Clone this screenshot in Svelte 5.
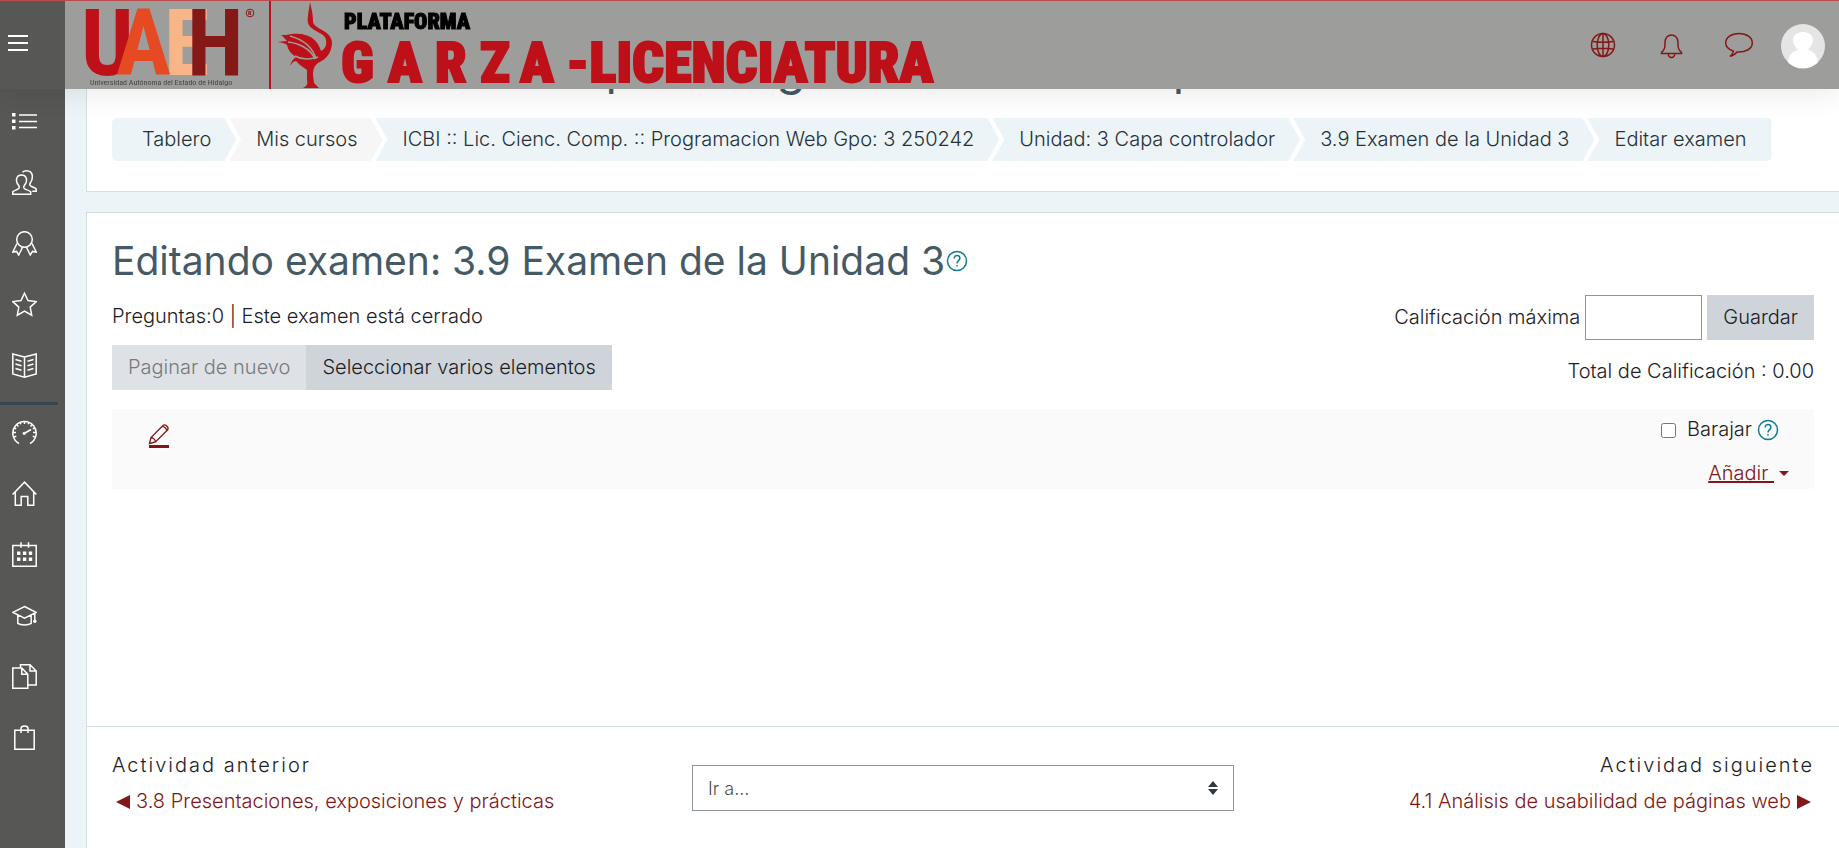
<script>
  const crumbs = [
    'Tablero',
    'Mis cursos',
    'ICBI :: Lic. Cienc. Comp. :: Programacion Web Gpo: 3 250242',
    'Unidad: 3 Capa controlador',
    '3.9 Examen de la Unidad 3',
    'Editar examen'
  ];

  const courseLinks = [
    { name: 'Curso', icon: 'list' },
    { name: 'Participantes', icon: 'users' },
    { name: 'Insignias', icon: 'badge' },
    { name: 'Competencias', icon: 'star' },
    { name: 'Calificaciones', icon: 'book' }
  ];

  const siteLinks = [
    { name: 'Tablero', icon: 'gauge' },
    { name: 'Inicio', icon: 'home' },
    { name: 'Calendario', icon: 'calendar' },
    { name: 'Mis cursos', icon: 'cap' },
    { name: 'Archivos', icon: 'files' },
    { name: 'Banco de contenido', icon: 'bag' }
  ];

  let maxGrade = $state('');
  let shuffle = $state(false);
</script>

{#snippet glyph(name)}
  <svg class="glyph" viewBox="0 0 25 25" aria-hidden="true">
    {#if name === 'list'}
      <path d="M7 6h18M7 12.500h18M7 18.500h18" />
      <path class="solid" d="M0 4h3.500v3.500H0zM0 10.500h3.500V14H0zM0 17h3.500v3.500H0z" />
    {:else if name === 'users'}
      <path d="M.8 24.200v-2.500c1.500-1.600 5-1.700 6.200-3.500.5-.8.300-1.900-.3-2.700C4.500 13 3.800 10 5.200 7.200 6.500 4.400 12.500 4.400 13.800 7.200c1.400 2.800.7 5.800-1.500 8.300-.6.800-.8 1.900-.3 2.700 1.200 1.800 5.200 1.900 6.700 3.500v2.500z" />
      <path d="M10.500 2.200c2.500-2.200 8.500-2 9.500 2 .8 3.200.2 6.300-1.700 8.800-.6.900-.7 1.900-.1 2.600 1.500 1.600 4.800 1.800 6 3.400v2.300h-4" />
    {:else if name === 'badge'}
      <circle cx="12.500" cy="8.500" r="7.800" />
      <path d="M5 12.500L.8 21l3.700-.6 2.200 3.600 4-8M20 12.500l4.200 8.500-3.700-.6-2.200 3.600-4-8" />
    {:else if name === 'star'}
      <path d="M12.500 1.200l3.500 7.400 8.200 1-6 5.500 1.500 8.100-7.200-4-7.200 4 1.500-8.100-6-5.500 8.200-1z" />
    {:else if name === 'book'}
      <path d="M12.500 4L.8 1v20l11.700 3.200L24.200 21V1zM12.500 4v20" />
      <path d="M3.500 6.500l6 1.700M3.500 11l6 1.700M3.500 15.500l6 1.700M21.500 6.500l-6 1.700M21.500 11l-6 1.700M21.500 15.500l-6 1.700" />
    {:else if name === 'gauge'}
      <path d="M7 23.500A11.700 11.700 0 1 1 18 23.500" />
      <path d="M12.500 1v3M1 12.500h3M21 12.500h3M4.500 4.500l2 2M20.500 4.500l-2 2M8 2l.8 2.300M17 2l-.8 2.300M2 8l2.200.8M23 8l-2.200.8M2 17l2.300-.8M23 17l-2.300-.8M13 13l6-3.500" />
      <circle class="solid" cx="12.300" cy="13.300" r="1.600" />
    {:else if name === 'home'}
      <path d="M.6 13.600L12.500 1.200l11.900 12.400M3.300 11v13.200h5.900v-8.800h6.600v8.800h5.900V11" />
    {:else if name === 'calendar'}
      <path d="M.8 3.500h23.400v20.700H.8zM9 .3v5.500M16.500.3v5.500" />
      <path class="solid" d="M5 9.500h3.400v3.400H5zM10.900 9.500h3.400v3.400h-3.400zM16.800 9.500h3.400v3.400h-3.400zM5 15.500h3.400v3.400H5zM10.900 15.500h3.400v3.400h-3.400zM16.800 15.500h3.400v3.400h-3.400z" />
    {:else if name === 'cap'}
      <path d="M12.500 3.500L24 9.300l-11.500 5.900L1 9.300zM5.800 12v8.300c2.700 2.200 10.700 2.200 13.400 0V12M22.800 10v8" />
      <circle class="solid" cx="22.800" cy="18.300" r="1.700" />
    {:else if name === 'files'}
      <path d="M.8 4h9l6 6.200v14H.8zM9.800 4v6.200h6" />
      <path d="M8.500 3.800V.8h9.500l6.200 6.200v14H16M18 .8V7h6.200" />
    {:else if name === 'bag'}
      <path d="M2.800 5.200h19.400v19H2.800zM9 8V3.500C9 .2 16 .2 16 3.500V8" />
    {/if}
  </svg>
{/snippet}

{#snippet help()}
  <svg class="help" viewBox="0 0 22 22" aria-hidden="true">
    <circle cx="11" cy="11" r="9.500" />
    <path d="M8.200 8.500c0-4 5.700-3.700 5.700-.2 0 2.300-2.900 2.500-2.900 5.200M11 15v1.500" />
  </svg>
{/snippet}

<header class="topbar">
  <button class="burger" aria-label="Menú"><span></span><span></span><span></span></button>

  <a class="brand" href="#inicio" aria-label="UAEH Plataforma Garza Licenciatura">
    <svg width="880" height="88" viewBox="0 0 880 88">
      <g class="uaeh">
        <text x="15" y="74" fill="#bd1018">U</text>
        <text x="98" y="74" fill="#f8b688">E</text>
        <text x="50" y="74" fill="#e64a22">A</text>
        <text x="121" y="74" fill="#841917">H</text>
      </g>
      <text class="small" x="24" y="84">Universidad Autónoma del Estado de Hidalgo</text>
      <circle cx="184" cy="12" r="3.800" fill="none" stroke="#841917" />
      <text class="reg" x="182" y="14">R</text>
      <path d="M203 0h2v88h-2z" fill="#bd1018" />
      <g fill="#bd1018">
        <path d="M244 1c2 9 3 13 3 20 2 8 18 8 19 20 0 10-5 17-14 21-4 3-5 7-5 12l1 8 5 5h-16c4-2 5-4 4-8l0-10-7-5-4-4-3 1-3 4c1-4 3-7 6-9-5-3-8-7-9-12-2-2-8-3-10-3l10-1c-3-3-4-5-6-6 4 0 7 0 10-1 10-1 25 0 30 17 4-2 6-6 5-11-1-8-15-8-18-17-1-5 1-13 2-21z" />
        <path d="M222 41c10 1 22 6 27 17M224 35c11 3 22 9 26 23M229 55c7 4 14 4 23 1" fill="none" stroke="#9d9d9b" stroke-width="1.500" />
      </g>
      <text class="plataforma" x="278" y="28">PLATAFORMA</text>
      <g class="garza">
        <text x="275" y="81">G</text>
        <text x="322" y="81">A</text>
        <text x="369" y="81">R</text>
        <text x="414" y="81">Z</text>
        <text x="454" y="81">A</text>
        <text x="500" y="81">-LICENCIATURA</text>
      </g>
    </svg>
  </a>

  <nav class="tools" aria-label="Usuario">
    <button aria-label="Idioma">
      <svg viewBox="0 0 28 28"><circle cx="10" cy="14" r="11.500" /><ellipse cx="10" cy="14" rx="5.800" ry="11.500" /><path d="M10 2.500v23M0 10.500c6 1 14 1 20 0M0 18c6-1 14-1 20 0" /></svg>
    </button>
    <button aria-label="Notificaciones">
      <svg viewBox="0 0 28 28"><path d="M2.500 22.500v-1.200c3.500-2.800 3.500-5 3.500-10C6 1.500 19 1.500 19 11.300c0 5 0 7.200 3.500 10v1.200zM9.300 23c.3 4.600 6.100 4.600 6.400 0" /></svg>
    </button>
    <button aria-label="Mensajes">
      <svg viewBox="0 0 28 28"><path d="M8.500 20.200C3.500 18.500.7 15.500.7 12 .7 6.500 6.500 2.500 14 2.500s13.300 4 13.300 9.500S21 21.500 12 21c-2 2.500-4 3.800-7 4.300 2-1.500 3-3 3.500-5.100z" /></svg>
    </button>
    <button class="avatar" aria-label="Menú de usuario">
      <svg viewBox="0 0 44 44"><circle cx="22" cy="22" r="22" fill="#e5e5e5" /><path d="M7 38.500C8 27 16 27 17 25.500 8 18 12 8 22 8s14 10 5 17.500C28 27 36 27 37 38.500A22 22 0 0 1 7 38.500z" fill="#fff" /></svg>
    </button>
  </nav>
</header>

<aside class="sidebar">
  <nav aria-label="Curso">
    {#each courseLinks as link}
      <a href="#{link.icon}" aria-label={link.name}>{@render glyph(link.icon)}</a>
    {/each}
  </nav>
  <nav class="site" aria-label="Sitio">
    {#each siteLinks as link}
      <a href="#{link.icon}" aria-label={link.name}>{@render glyph(link.icon)}</a>
    {/each}
  </nav>
</aside>

<main>
  <section class="card heading">
    <h1>ICBI :: Lic. Cienc. Comp. :: Programacion Web Gpo: 3 250242</h1>
    <ol class="crumbs">
      {#each crumbs as crumb}
        <li><a href="#ruta">{crumb}</a></li>
      {/each}
    </ol>
  </section>

  <section class="card editor">
    <div class="body">
      <h2>Editando examen: 3.9 Examen de la Unidad 3<button class="ask" aria-label="Ayuda">{@render help()}</button></h2>

      <div class="controls">
        <div class="left">
          <p>Preguntas:0 | Este examen está cerrado</p>
          <div class="group">
            <button class="btn" disabled>Paginar de nuevo</button>
            <button class="btn">Seleccionar varios elementos</button>
          </div>
        </div>
        <div class="right">
          <form class="grade" onsubmit={(e) => e.preventDefault()}>
            <label for="maxgrade">Calificación máxima</label>
            <input id="maxgrade" type="text" bind:value={maxGrade} />
            <button class="btn save">Guardar</button>
          </form>
          <p>Total de Calificación : 0.00</p>
        </div>
      </div>

      <div class="slot">
        <a class="pencil" href="#editar" aria-label="Editar encabezado">
          <svg viewBox="0 0 22 26"><path d="M1.500 20.500L3 14.500 15 2.500c2-2 6.500 2 4.500 4.500L7.500 19zM3 14.500c2 0 4.500 2.200 4.500 4.500M14.200 3.300c2 0 4.500 2.500 4.500 4.500" /><path class="bar" d="M1 22h20v3H1z" /></svg>
        </a>
        <div class="options">
          <div class="shuffle">
            <input id="shuffle" type="checkbox" bind:checked={shuffle} />
            <label for="shuffle">Barajar</label>
            <button class="ask" aria-label="Ayuda con Barajar">{@render help()}</button>
          </div>
          <a class="add" href="#agregar"><span>Añadir&nbsp;</span><i></i></a>
        </div>
      </div>
    </div>

    <footer>
      <div class="prev">
        <p>Actividad anterior</p>
        <a href="#anterior"><svg viewBox="0 0 14 14"><path d="M0 7L14 0v14z" /></svg>3.8 Presentaciones, exposiciones y prácticas</a>
      </div>
      <div class="jump">
        <select aria-label="Ir a...">
          <option>Ir a...</option>
        </select>
        <svg viewBox="0 0 10 14" aria-hidden="true"><path d="M0 6l5-6 5 6zM0 8h10l-5 6z" /></svg>
      </div>
      <div class="next">
        <p>Actividad siguiente</p>
        <a href="#siguiente">4.1 Análisis de usabilidad de páginas web<svg viewBox="0 0 14 14"><path d="M14 7L0 0v14z" /></svg></a>
      </div>
    </footer>
  </section>
</main>

<style>
  :global(body) {
    background: #ecf4f8;
    color: #1d2125;
    font: 300 20px/27px Inter, 'Noto Sans', sans-serif;
    overflow: hidden;
  }

  :global(*) {
    box-sizing: border-box;
  }

  h1,
  h2,
  p,
  ol {
    margin: 0;
    padding: 0;
    font-weight: 300;
  }

  a {
    color: #811716;
    text-decoration: none;
  }

  button,
  input,
  select {
    font: inherit;
    color: inherit;
    margin: 0;
    border: 0;
    border-radius: 0;
  }

  button {
    background: none;
    padding: 0;
  }

  svg {
    display: block;
  }

  .topbar {
    position: fixed;
    z-index: 3;
    top: 0;
    left: 0;
    right: 0;
    height: 89px;
    display: flex;
    align-items: stretch;
    background: #9d9d9b;
    border-top: 1px solid #bb4a4c;
    box-shadow: 0 2px 30px rgba(0, 0, 0, 0.1);
  }

  .burger {
    flex: none;
    width: 65px;
    padding: 0 0 5px 8px;
    background: #575756;
    display: flex;
    flex-direction: column;
    justify-content: center;
    gap: 5px;
  }

  .burger span {
    width: 20px;
    height: 2px;
    background: #fff;
  }

  .brand {
    flex: none;
    padding-left: 1px;
  }

  .brand text {
    font-family: 'Liberation Sans Narrow', 'Roboto Condensed', 'Liberation Sans', sans-serif;
    font-weight: 900;
  }

  .brand .uaeh text {
    font-size: 92px;
    font-weight: 700;
  }

  .brand .small {
    font-size: 8px;
    font-weight: 400;
    fill: #454545;
  }

  .brand .reg {
    font-size: 6px;
    fill: #841917;
  }

  .brand .plataforma {
    font-size: 22px;
    stroke: #000;
    stroke-width: 1px;
  }

  .brand .garza text {
    font-size: 56px;
    fill: #bd1018;
    stroke: #bd1018;
    stroke-width: 2px;
  }

  .tools {
    margin-left: auto;
    display: flex;
    align-items: center;
    gap: 38px;
    padding-right: 14px;
  }

  .tools svg {
    width: 28px;
    height: 28px;
    fill: none;
    stroke: #841917;
    stroke-width: 1.5px;
    overflow: visible;
  }

  .tools .avatar svg {
    width: 44px;
    height: 44px;
    stroke: none;
  }

  .tools .avatar {
    margin-left: -10px;
    padding-top: 2px;
  }

  .sidebar {
    position: fixed;
    z-index: 2;
    top: 0;
    bottom: 0;
    left: 0;
    width: 65px;
    padding-top: 91px;
    background: #575756;
  }

  .sidebar nav {
    display: flex;
    flex-direction: column;
  }

  .sidebar a {
    height: 61px;
    display: flex;
    align-items: center;
    padding-left: 12px;
  }

  .sidebar .site {
    margin: 6px 7px 0 0;
    border-top: 3px solid #37474f;
  }

  .sidebar .site a:first-child {
    padding-bottom: 4px;
    height: 58px;
  }

  .glyph {
    width: 25px;
    height: 25px;
    fill: none;
    stroke: #fff;
    stroke-width: 1.5px;
  }

  .glyph .solid {
    fill: #fff;
    stroke: none;
  }

  main {
    margin-left: 86px;
    padding-top: 20px;
    display: flex;
    flex-direction: column;
    gap: 20px;
    min-height: calc(100vh + 1px);
  }

  .card {
    background: #fff;
    border: 1px solid #d5dfe3;
    border-right: 0;
  }

  .heading {
    padding: 20px 25px 30px;
  }

  h1 {
    color: #455a64;
    font-size: 47px;
    font-weight: 400;
    line-height: 54px;
    margin-bottom: 23px;
    white-space: nowrap;
  }

  .crumbs {
    display: flex;
    list-style: none;
  }

  .crumbs li {
    flex: none;
    height: 43px;
    padding: 0 25px 0 27px;
    background: #ecf4f8;
    line-height: 43px;
    white-space: nowrap;
    clip-path: polygon(0 0, calc(100% - 12px) 0, 100% 50%, calc(100% - 12px) 100%, 0 100%, 12px 50%);
  }

  .crumbs li + li {
    margin-left: -7px;
  }

  .crumbs li:first-child {
    padding-left: 30px;
    clip-path: polygon(0 0, calc(100% - 12px) 0, 100% 50%, calc(100% - 12px) 100%, 0 100%);
    border-radius: 5px 0 0 5px;
  }

  .crumbs li:nth-child(2) {
    background: #f6f6f6;
  }

  .crumbs li:last-child {
    clip-path: polygon(0 0, 100% 0, 100% 100%, 0 100%, 12px 50%);
    border-radius: 0 5px 5px 0;
  }

  .crumbs a {
    color: #263238;
  }

  .editor {
    flex: 1;
    display: flex;
    flex-direction: column;
  }

  .body {
    flex: 1;
    padding: 24px 25px 0;
  }

  h2 {
    display: flex;
    align-items: center;
    gap: 1px;
    color: #455a64;
    font-size: 39px;
    font-weight: 400;
    line-height: 48px;
    white-space: nowrap;
  }

  .help {
    width: 22px;
    height: 22px;
    fill: none;
    stroke: #0f7b94;
    stroke-width: 1.5px;
  }

  .controls {
    display: flex;
    justify-content: space-between;
    margin-top: 10px;
  }

  .left,
  .right {
    display: flex;
    flex-direction: column;
  }

  .left {
    padding-top: 8px;
    gap: 15px;
  }

  .right {
    align-items: flex-end;
    gap: 18px;
  }

  .group {
    display: flex;
  }

  .btn {
    height: 45px;
    padding: 0 16px;
    background: #ced4da;
    color: #1d2125;
    white-space: nowrap;
  }

  .btn:disabled {
    background: #dee2e6;
    color: #777a7d;
  }

  .grade {
    display: flex;
    align-items: center;
    gap: 5px;
  }

  .grade input {
    width: 117px;
    height: 45px;
    padding: 0 12px;
    border: 1px solid #8f959e;
  }

  .slot {
    display: flex;
    justify-content: space-between;
    margin-top: 19px;
    padding: 7px 25px 0 36px;
    height: 80px;
    background: #fafafa;
  }

  .pencil svg {
    width: 22px;
    height: 26px;
    margin-top: 7px;
    fill: none;
    stroke: #811716;
    stroke-width: 1.3px;
  }

  .pencil .bar {
    fill: #811716;
    stroke: none;
  }

  .options {
    display: flex;
    flex-direction: column;
    align-items: flex-end;
    gap: 17px;
  }

  .shuffle {
    display: flex;
    align-items: center;
    padding-right: 10px;
  }

  .shuffle input {
    width: 15px;
    height: 15px;
    margin: 2px 11px 0 0;
  }

  .shuffle label {
    margin-right: 5px;
  }

  .add {
    display: flex;
    align-items: center;
    gap: 5px;
  }

  .add span {
    text-decoration: underline;
  }

  .add i {
    border: 5px solid transparent;
    border-top-color: #811716;
    border-bottom: 0;
  }

  footer {
    display: grid;
    grid-template-columns: 1fr 542px 1fr;
    align-items: start;
    column-gap: 20px;
    height: 122px;
    padding: 25px 25px 0;
    border-top: 1px solid #d5dfe3;
  }

  footer p {
    letter-spacing: 2px;
  }

  .prev,
  .next {
    display: flex;
    flex-direction: column;
    gap: 9px;
    white-space: nowrap;
  }

  .next {
    align-items: flex-end;
  }

  footer a {
    display: flex;
    align-items: center;
    gap: 6px;
    padding: 0 3px 0 4px;
  }

  footer a svg {
    width: 14px;
    height: 14px;
    fill: #811716;
  }

  .jump {
    position: relative;
    margin-top: 13px;
  }

  .jump select {
    width: 100%;
    height: 46px;
    padding: 0 15px;
    appearance: none;
    background: #fff;
    border: 1px solid #8f959e;
    color: #495057;
    font-size: 18px;
  }

  .jump svg {
    position: absolute;
    right: 16px;
    top: 16px;
    width: 10px;
    height: 14px;
    fill: #343a40;
    pointer-events: none;
  }
</style>
